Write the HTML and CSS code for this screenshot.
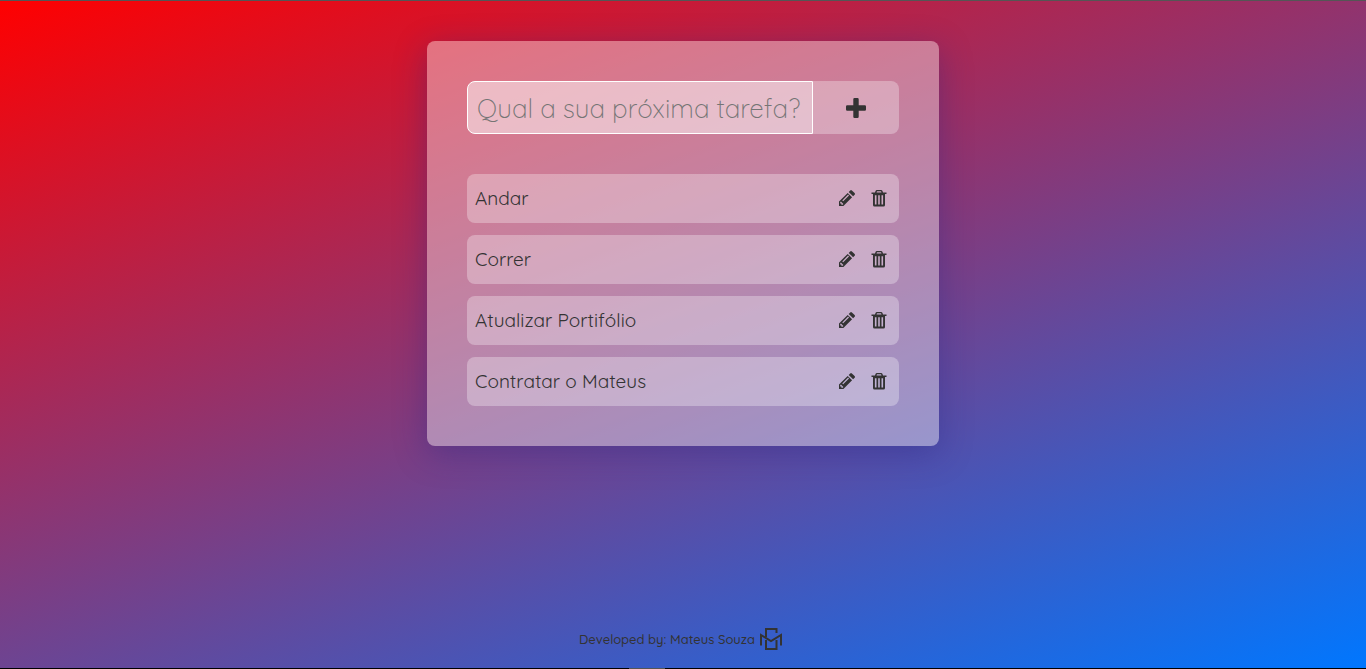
FILE: index.html
```html
<!DOCTYPE html>
<html lang="pt-BR">
<head>
<meta charset="utf-8">
<title>Lista de tarefas</title>
<link rel="stylesheet" href="styles.css">
</head>
<body>
<svg class="symbols" aria-hidden="true">
  <symbol id="pencil" viewBox="0 0 16 16">
    <path fill-rule="evenodd" d="M0 16V11.600L8.700 2.900 13.100 7.300 4.400 16ZM1.200 12.300V13.600H2.400V14.800H3.700L4.400 14.100 1.900 11.600ZM3.300 10.400 4.200 11.300 10 5.500 9.100 4.600Z"/>
    <path d="M9.700 1.900 11.200.400q.800-.800 1.700 0l2.700 2.700q.800.900 0 1.700L14.100 6.300z"/>
  </symbol>
  <symbol id="trash" viewBox="0 0 16 18">
    <path fill-rule="evenodd" d="M4 3.500 4.500 2Q4.900 1 6 1h4q1.100 0 1.500 1L12 3.500H15.500v1.500H.5V3.500ZM5.500 3.500h5L10 2.300H6Z"/>
    <path fill-rule="evenodd" d="M2 5h12v11q0 1.500-1.500 1.500H3.500Q2 17.500 2 16ZM3.900 6.300v9.200h1.600v-9.200ZM7.200 6.300v9.200h1.600v-9.200ZM10.500 6.300v9.200h1.600v-9.200Z"/>
  </symbol>
</svg>
<main class="card">
  <form class="new-task">
    <input class="new-task-input" type="text" placeholder="Qual a sua próxima tarefa?" aria-label="Nova tarefa">
    <button class="new-task-button" type="button" aria-label="Adicionar">
      <svg class="plus" viewBox="0 0 20 20"><path d="M8.500 0h3q1.200 0 1.200 1.200v6.100h6.100q1.200 0 1.200 1.200v3q0 1.200-1.200 1.200h-6.100v6.100q0 1.200-1.200 1.200h-3q-1.200 0-1.200-1.200v-6.100H1.200Q0 12.700 0 11.500v-3q0-1.200 1.200-1.200h6.100V1.200Q7.300 0 8.500 0z"/></svg>
    </button>
  </form>
  <ul class="tasks">
    <li class="task"><span class="task-name">Andar</span><button class="action" type="button" aria-label="Editar"><svg class="pencil"><use href="#pencil"/></svg></button><button class="action" type="button" aria-label="Excluir"><svg class="trash"><use href="#trash"/></svg></button></li>
    <li class="task"><span class="task-name">Correr</span><button class="action" type="button" aria-label="Editar"><svg class="pencil"><use href="#pencil"/></svg></button><button class="action" type="button" aria-label="Excluir"><svg class="trash"><use href="#trash"/></svg></button></li>
    <li class="task"><span class="task-name">Atualizar Portifólio</span><button class="action" type="button" aria-label="Editar"><svg class="pencil"><use href="#pencil"/></svg></button><button class="action" type="button" aria-label="Excluir"><svg class="trash"><use href="#trash"/></svg></button></li>
    <li class="task"><span class="task-name">Contratar o Mateus</span><button class="action" type="button" aria-label="Editar"><svg class="pencil"><use href="#pencil"/></svg></button><button class="action" type="button" aria-label="Excluir"><svg class="trash"><use href="#trash"/></svg></button></li>
  </ul>
</main>
<footer class="footer">
  <span>Developed by: Mateus Souza</span>
  <svg class="logo" viewBox="0 0 24 24"><path d="M17.500 6V2H7V10M2 18.500V8L12 14 22 8V18.500M7 13V22H17.500V13"/></svg>
</footer>
<div class="bottom-edge"></div>
</body>
</html>
```
FILE: styles.css
```css
* {
  box-sizing: border-box;
}

body {
  display: flex;
  flex-direction: column;
  align-items: center;
  min-height: 100vh;
  margin: 0;
  padding-top: 40px;
  border-top: 1px solid #555;
  background: linear-gradient(160deg, #ff0000, #0077ff);
  color: #333;
  font-family: Quicksand, Lato, sans-serif;
}

.symbols {
  position: absolute;
  width: 0;
  height: 0;
}

svg {
  display: block;
  fill: #333;
}

button {
  padding: 0;
  border: 0;
  background: none;
  cursor: pointer;
}

.card {
  width: 100%;
  max-width: 512px;
  padding: 40px;
  border-radius: 8px;
  background: rgba(255, 255, 255, 0.4);
  box-shadow: 0 8px 32px rgba(31, 38, 135, 0.37);
}

.new-task {
  display: flex;
  height: 53px;
  margin-bottom: 40px;
}

.new-task-input {
  width: 80%;
  padding: 2px 8px 0 9px;
  border: 1px solid #fff;
  border-radius: 8px 0 0 8px;
  outline: none;
  background: rgba(255, 255, 255, 0.5);
  color: #333;
  font: 350 26px Quicksand, Lato, sans-serif;
}

.new-task-input::placeholder {
  color: #757575;
}

.new-task-button {
  flex: 1;
  display: grid;
  place-items: center;
  border-radius: 0 8px 8px 0;
  background: rgba(255, 255, 255, 0.3);
}

.plus {
  width: 20px;
  height: 20px;
}

.tasks {
  display: grid;
  gap: 12px;
  margin: 0;
  padding: 0;
  list-style: none;
}

.task {
  display: flex;
  align-items: center;
  gap: 16px;
  min-height: 49px;
  padding: 0 12px 1px 8px;
  border-radius: 8px;
  background: rgba(255, 255, 255, 0.3);
}

.task-name {
  flex: 1;
  font-size: 19px;
  font-weight: 400;
}

.pencil {
  width: 16px;
  height: 16px;
}

.trash {
  width: 16px;
  height: 18px;
}

.footer {
  display: flex;
  align-items: center;
  gap: 4px;
  margin-top: auto;
  padding: 0 4px 17px 0;
  font-size: 13px;
  font-weight: 500;
}

.logo {
  width: 24px;
  height: 24px;
  fill: none;
  stroke: #333;
  stroke-width: 2;
}

.bottom-edge {
  width: 100%;
  height: 1px;
  background: linear-gradient(#555, #555) 47.3% 0 / 36px 1px no-repeat #000;
}
```
